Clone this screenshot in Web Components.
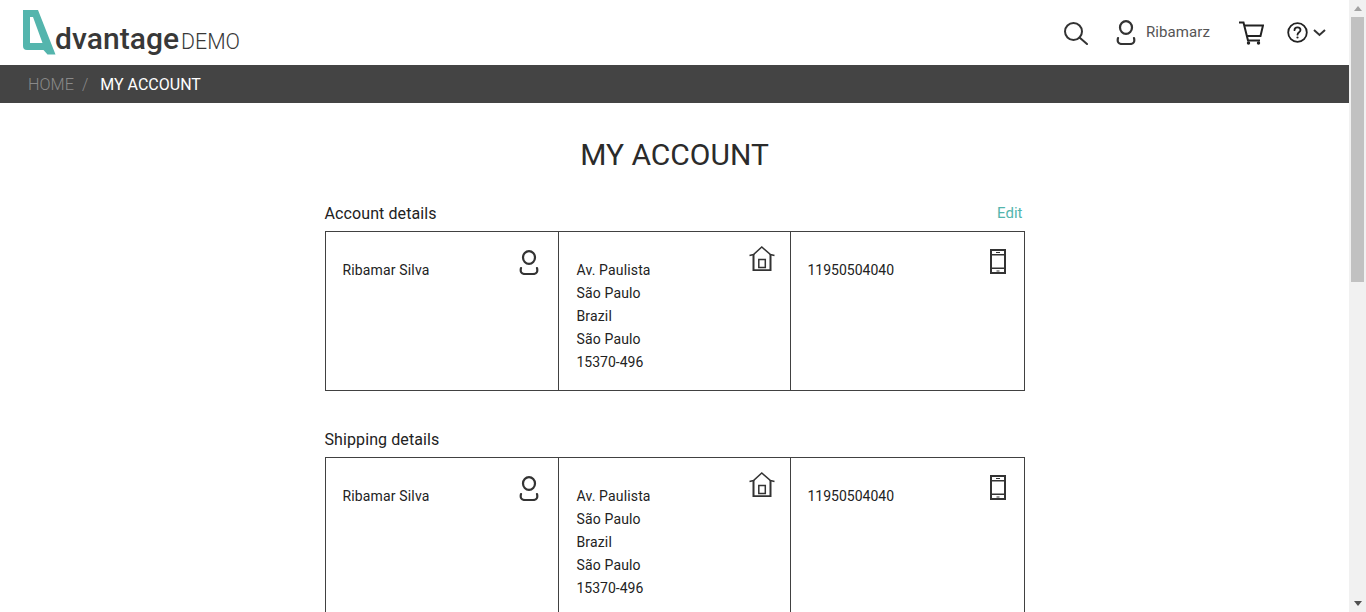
<!DOCTYPE html>
<html>
<head>
<meta charset="utf-8">
<title>My Account</title>
<style>
    html, body { margin: 0; height: 100%; overflow: hidden; background: #fff; }
    body { font-family: Roboto, "Liberation Sans", sans-serif; }
</style>
</head>
<body>
<app-page>
    <app-header user="Ribamarz"></app-header>
    <app-breadcrumb current="MY ACCOUNT"></app-breadcrumb>
    <h-title>MY ACCOUNT</h-title>
    <details-section heading="Account details" edit name="Ribamar Silva" phone="11950504040"></details-section>
    <details-section heading="Shipping details" name="Ribamar Silva" phone="11950504040"></details-section>
</app-page>

<script>
const ICONS = {
    user: `<svg width="20" height="25" viewBox="0 0 20 25" fill="none" stroke="#333" stroke-width="2.200" stroke-linecap="round"><ellipse cx="10" cy="7.500" rx="6" ry="6.300"/><path d="M2 18C1 22 2.500 24 6 24H14C17.500 24 19 22 18 18"/></svg>`,
    house: `<svg width="26" height="25" viewBox="0 0 26 25" fill="none" stroke="#333" stroke-width="1.500"><path d="M0.500 9.500L4.500 8.500L12.800 1L21.500 8.500L25.500 9.500"/><path d="M4.500 8V24.200H21.500V8" stroke-width="2"/><rect x="9.800" y="13.500" width="6.500" height="8"/></svg>`,
    phone: `<svg width="16" height="25" viewBox="0 0 16 25"><rect x="1" y="1" width="14" height="23" fill="none" stroke="#333" stroke-width="2"/><rect x="1" y="5" width="14" height="1.500" fill="#333"/><rect x="1" y="18.500" width="14" height="1.500" fill="#333"/><rect x="6" y="3" width="4" height="1" fill="#333"/><rect x="6.500" y="21.500" width="3" height="1" fill="#333"/></svg>`,
    search: `<svg width="24" height="23" viewBox="0 0 24 23" fill="none" stroke="#333" stroke-width="2" stroke-linecap="round"><circle cx="9.500" cy="9.500" r="8.500"/><path d="M15.500 15.500L23 22"/></svg>`,
    cart: `<svg width="25" height="24" viewBox="0 0 25 24" fill="none" stroke="#222" stroke-width="2"><path d="M0 1.500H4.500L9 19.500H21"/><path d="M5 4.500H24L21.500 15H7"/><circle cx="9.500" cy="22" r="1.700" fill="#222" stroke="none"/><circle cx="19.500" cy="22" r="1.700" fill="#222" stroke="none"/></svg>`,
    help: `<svg width="21" height="21" viewBox="0 0 21 21" fill="none" stroke="#222" stroke-width="1.800"><circle cx="10.500" cy="10.500" r="9.300"/><path d="M7.500 8.200C7.500 6.500 8.900 5.400 10.500 5.400C12.200 5.400 13.500 6.500 13.500 8C13.500 10.200 10.500 10.200 10.500 12.700" stroke-linecap="round"/><circle cx="10.500" cy="15.500" r="1.100" fill="#222" stroke="none"/></svg>`,
    chevron: `<svg width="13" height="8" viewBox="0 0 13 8" fill="none" stroke="#333" stroke-width="2"><path d="M1 1L6.500 6L12 1"/></svg>`,
    logo: `<svg width="33" height="45" viewBox="0 0 33 45"><path d="M0 0H15L32.500 44.500H24.500L20.500 40H4Q0 40 0 36ZM7 7V33H19.500L10 7Z" fill="#54b5ad" fill-rule="evenodd"/></svg>`
};

class AppPage extends HTMLElement {
    constructor() {
        super();
        this.attachShadow({ mode: 'open' });
        this.shadowRoot.innerHTML = `
            <style>
                :host { display: flex; height: 612px; overflow: hidden; }
                .content { flex: 1; min-width: 0; height: 100%; overflow: hidden; }
            </style>
            <div class="content"><slot></slot></div>
            <app-scrollbar></app-scrollbar>
        `;
    }
}

class AppScrollbar extends HTMLElement {
    constructor() {
        super();
        this.attachShadow({ mode: 'open' });
        this.shadowRoot.innerHTML = `
            <style>
                :host { display: flex; flex-direction: column; width: 17px; height: 100%; background: #f1f1f1; flex-shrink: 0; }
                .arrow { height: 17px; display: flex; align-items: center; justify-content: center; }
                .thumb { height: 265px; margin: 0 2px; background: #c1c1c1; }
                .track { flex: 1; }
            </style>
            <div class="arrow"><svg width="8" height="5"><path d="M4 0L8 5H0Z" fill="#a3a3a3"/></svg></div>
            <div class="thumb"></div>
            <div class="track"></div>
            <div class="arrow"><svg width="8" height="5"><path d="M0 0H8L4 5Z" fill="#505050"/></svg></div>
        `;
    }
}

class AppHeader extends HTMLElement {
    constructor() {
        super();
        this.attachShadow({ mode: 'open' });
    }

    connectedCallback() {
        const user = this.getAttribute('user') || '';
        this.shadowRoot.innerHTML = `
            <style>
                :host { display: flex; align-items: flex-start; height: 65px; background: #fff; padding-left: 23px; padding-right: 23px; }
                .logo { padding-top: 10px; }
                svg { display: block; }
                .name { font-size: 30px; font-weight: 500; color: #383838; line-height: 38px; margin: 20px 0 0 -1px; letter-spacing: 0.05px; }
                .demo { font-size: 21.3px; font-weight: 300; color: #383838; line-height: 27px; margin: 28px 0 0 2px; }
                nav { margin-left: auto; display: flex; align-items: center; height: 65px; }
                .search { margin-right: 28px; margin-top: 1px; }
                .user { margin-right: 10px; }
                .uname { font-size: 15px; color: #555; letter-spacing: 0.1px; margin-right: 29px; margin-top: -1px; }
                .cart { margin-right: 23px; }
                .help { margin-right: 5px; }
            </style>
            <div class="logo">${ICONS.logo}</div>
            <span class="name">dvantage</span>
            <span class="demo">DEMO</span>
            <nav>
                <span class="search">${ICONS.search}</span>
                <span class="user">${ICONS.user}</span>
                <span class="uname">${user}</span>
                <span class="cart">${ICONS.cart}</span>
                <span class="help">${ICONS.help}</span>
                <span class="chev">${ICONS.chevron}</span>
            </nav>
        `;
    }
}

class AppBreadcrumb extends HTMLElement {
    constructor() {
        super();
        this.attachShadow({ mode: 'open' });
    }

    connectedCallback() {
        const current = this.getAttribute('current') || '';
        this.shadowRoot.innerHTML = `
            <style>
                :host { display: flex; align-items: center; height: 38px; background: #444; padding-left: 28px; font-size: 16px; }
                .home { color: #8a8a8a; font-weight: 300; font-size: 16.3px; }
                .sep { color: #8a8a8a; font-weight: 300; margin: 0 12px 0 8px; }
                .cur { color: #fff; font-weight: 400; }
            </style>
            <span class="home">HOME</span><span class="sep">/</span><span class="cur">${current}</span>
        `;
    }
}

class HTitle extends HTMLElement {
    constructor() {
        super();
        this.attachShadow({ mode: 'open' });
        this.shadowRoot.innerHTML = `
            <style>
                :host { display: block; text-align: center; font-size: 30px; font-weight: 400; color: #2b2b2b; line-height: 38px; padding: 33px 0 30px; }
            </style>
            <slot></slot>
        `;
    }
}

class DetailsSection extends HTMLElement {
    constructor() {
        super();
        this.attachShadow({ mode: 'open' });
    }

    connectedCallback() {
        const heading = this.getAttribute('heading') || '';
        const name = this.getAttribute('name') || '';
        const phone = this.getAttribute('phone') || '';
        const edit = this.hasAttribute('edit') ? '<span class="edit">Edit</span>' : '';
        this.shadowRoot.innerHTML = `
            <style>
                :host { display: block; width: 700px; margin: 0 auto 39px; color: #222; }
                .top { display: flex; justify-content: space-between; align-items: center; height: 19px; margin-bottom: 8px; margin-right: 2px; }
                h2 { margin: 0; font-size: 16px; font-weight: 400; color: #222; letter-spacing: 0.1px; }
                .edit { font-size: 15px; font-weight: 400; color: #54b5ad; margin-bottom: 2px; }
                .grid { display: grid; grid-template-columns: 232px 232px 234px; height: 160px; border: 1px solid #414141; box-sizing: border-box; font-size: 14px; line-height: 23px; letter-spacing: 0.15px; }
                .cell { position: relative; padding: 27px 17px 0; border-left: 1px solid #414141; }
                .cell:first-child { border-left: 0; }
                .cell:nth-child(2) { padding-left: 18px; }
                .cell svg { position: absolute; display: block; }
                .cell .user { top: 18px; right: 19px; }
                .cell .house { top: 14px; right: 15px; }
                .cell .phone { top: 17px; right: 18px; }
                .cell span { display: block; }
                .num { letter-spacing: 0; }
            </style>
            <div class="top"><h2>${heading}</h2>${edit}</div>
            <div class="grid">
                <div class="cell">${ICONS.user.replace('<svg', '<svg class="user"')}<span>${name}</span></div>
                <div class="cell">${ICONS.house.replace('<svg', '<svg class="house"')}<span>Av. Paulista</span><span>São Paulo</span><span>Brazil</span><span>São Paulo</span><span class="num">15370-496</span></div>
                <div class="cell">${ICONS.phone.replace('<svg', '<svg class="phone"')}<span class="num">${phone}</span></div>
            </div>
        `;
    }
}

customElements.define('app-scrollbar', AppScrollbar);
customElements.define('app-page', AppPage);
customElements.define('app-header', AppHeader);
customElements.define('app-breadcrumb', AppBreadcrumb);
customElements.define('h-title', HTitle);
customElements.define('details-section', DetailsSection);
</script>
</body>
</html>
